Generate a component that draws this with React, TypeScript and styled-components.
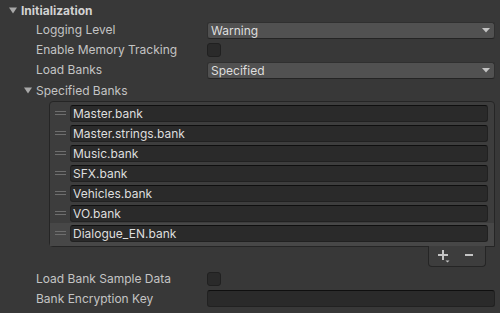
import * as React from 'react';
import styled, { createGlobalStyle } from 'styled-components';

const GlobalStyle = createGlobalStyle`
    html, body {
        margin: 0;
        padding: 0;
        background: #383838;
    }
`;

const Inspector = styled.div`
    width: 500px;
    height: 313px;
    overflow: hidden;
    background: #383838;
    font-family: Inter, "Noto Sans", sans-serif;
    font-size: 12px;
    color: #c4c4c4;
    display: flex;
    flex-direction: column;
`;

const FoldoutRow = styled.div<{ $indent: number; $bold?: boolean }>`
    height: 20px;
    display: flex;
    align-items: center;
    padding-left: ${p => p.$indent}px;
    gap: 4px;
    font-weight: ${p => (p.$bold ? 700 : 400)};
    color: ${p => (p.$bold ? '#d2d2d2' : '#c4c4c4')};
`;

const PropRow = styled.div`
    height: 20px;
    display: grid;
    grid-template-columns: 171px 1fr;
    align-items: start;
    padding-left: 36px;
    padding-right: 5px;
`;

const Label = styled.div`
    line-height: 20px;
    white-space: nowrap;
`;

const Dropdown = styled.div`
    margin-top: 2px;
    height: 17px;
    box-sizing: border-box;
    background: #515151;
    border: 1px solid #303030;
    border-bottom-color: #242424;
    border-radius: 3px;
    display: flex;
    align-items: center;
    justify-content: space-between;
    padding: 0 4px 0 3px;
    color: #dedede;
`;

const Checkbox = styled.div`
    margin-top: 3px;
    width: 14px;
    height: 14px;
    box-sizing: border-box;
    background: #2a2a2a;
    border: 1px solid #202020;
    border-radius: 3px;
`;

const TextField = styled.div`
    margin-top: 1px;
    height: 17px;
    box-sizing: border-box;
    background: #2a2a2a;
    border: 1px solid #212121;
    border-top-color: #0f0f0f;
    border-radius: 3px;
    padding-left: 2px;
    line-height: 15px;
    color: #dedede;
    white-space: nowrap;
`;

const ListBox = styled.div`
    margin: 1px 5px 0 49px;
    border: 1px solid #252525;
    border-radius: 4px 4px 0 4px;
    background: #3d3d3d;
    padding-top: 1px;
`;

const ListItem = styled.div<{ $selected?: boolean }>`
    height: ${p => (p.$selected ? 23 : 20)}px;
    display: flex;
    align-items: flex-start;
    padding-right: 6px;
    background: ${p => (p.$selected ? '#474747' : 'transparent')};
`;

const Handle = styled.div`
    width: 20px;
    height: 20px;
    flex-shrink: 0;
    display: flex;
    align-items: center;
    justify-content: center;
`;

const ItemField = styled(TextField)`
    flex: 1;
    margin-top: 2px;
`;

// footer hangs under the list's bottom-right corner
const Footer = styled.div`
    align-self: flex-end;
    margin-right: 14px;
    margin-top: -1px;
    width: 58px;
    height: 21px;
    box-sizing: border-box;
    background: #3d3d3d;
    border: 1px solid #252525;
    border-top: none;
    border-radius: 0 0 4px 4px;
    display: flex;
    align-items: center;
    gap: 13px;
    padding-left: 8px;
`;

const IconButton = styled.div`
    height: 16px;
    display: flex;
    align-items: center;
`;

const Spacer = styled.div`
    height: 2px;
`;

const Triangle = () => (
    <svg width="8" height="7" viewBox="0 0 8 7">
        <path d="M0 0.5 L8 0.5 L4 6.5 Z" fill="#a8a8a8" />
    </svg>
);

const DropArrow = () => (
    <svg width="8" height="5" viewBox="0 0 8 5">
        <path d="M0 0 L8 0 L4 4.5 Z" fill="#c4c4c4" />
    </svg>
);

const DragHandle = () => (
    <svg width="11" height="5" viewBox="0 0 11 5">
        <rect x="0" y="0" width="11" height="1" fill="#6e6e6e" />
        <rect x="0" y="3" width="11" height="1" fill="#6e6e6e" />
    </svg>
);

const PlusIcon = () => (
    <svg width="14" height="14" viewBox="0 0 14 14">
        <rect x="1" y="5" width="10" height="2" fill="#c4c4c4" />
        <rect x="5" y="1" width="2" height="10" fill="#c4c4c4" />
        <path d="M8.5 11.5 L12.5 11.5 L10.5 13.5 Z" fill="#c4c4c4" />
    </svg>
);

const MinusIcon = () => (
    <svg width="10" height="14" viewBox="0 0 10 14">
        <rect x="1" y="5" width="8" height="2" fill="#c4c4c4" />
    </svg>
);

const banks = [
    'Master.bank',
    'Master.strings.bank',
    'Music.bank',
    'SFX.bank',
    'Vehicles.bank',
    'VO.bank',
    'Dialogue_EN.bank',
];

export default function App() {
    return (
        <>
            <GlobalStyle />
            <Inspector>
                <FoldoutRow $indent={9} $bold>
                    <Triangle />
                    <span>Initialization</span>
                </FoldoutRow>
                <PropRow>
                    <Label>Logging Level</Label>
                    <Dropdown>
                        <span>Warning</span>
                        <DropArrow />
                    </Dropdown>
                </PropRow>
                <PropRow>
                    <Label>Enable Memory Tracking</Label>
                    <Checkbox />
                </PropRow>
                <PropRow>
                    <Label>Load Banks</Label>
                    <Dropdown>
                        <span>Specified</span>
                        <DropArrow />
                    </Dropdown>
                </PropRow>
                <FoldoutRow $indent={24}>
                    <Triangle />
                    <span>Specified Banks</span>
                </FoldoutRow>
                <ListBox>
                    {banks.map((name, i) => (
                        <ListItem key={name} $selected={i === banks.length - 1}>
                            <Handle>
                                <DragHandle />
                            </Handle>
                            <ItemField>{name}</ItemField>
                        </ListItem>
                    ))}
                </ListBox>
                <Footer>
                    <IconButton>
                        <PlusIcon />
                    </IconButton>
                    <IconButton>
                        <MinusIcon />
                    </IconButton>
                </Footer>
                <Spacer />
                <PropRow>
                    <Label>Load Bank Sample Data</Label>
                    <Checkbox />
                </PropRow>
                <PropRow>
                    <Label>Bank Encryption Key</Label>
                    <TextField />
                </PropRow>
            </Inspector>
        </>
    );
}
